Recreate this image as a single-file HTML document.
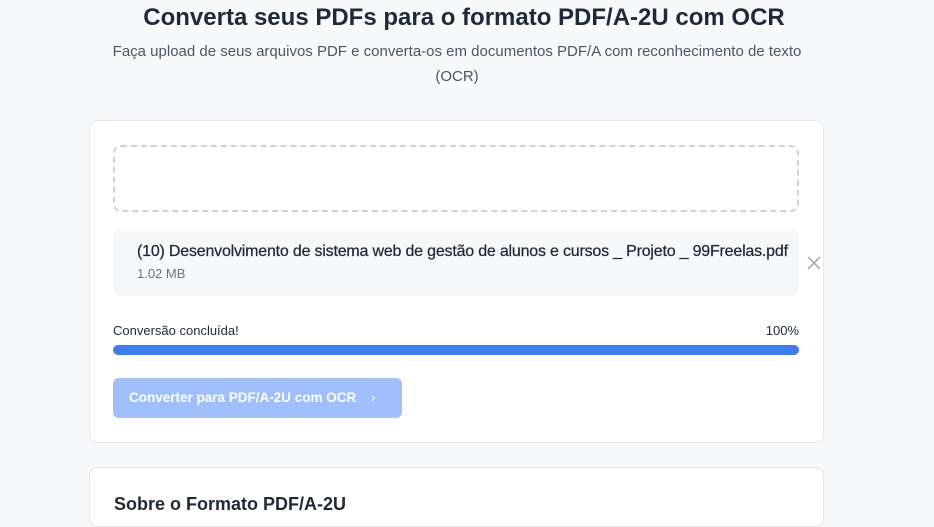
<!DOCTYPE html>
<html><head><meta charset="utf-8"><style>
*{box-sizing:border-box;margin:0;padding:0}
body{width:934px;height:505px;overflow:hidden;background:#f8f9fb;font-family:"Liberation Sans",sans-serif;color:#1f2937;position:relative}
h1{position:absolute;top:4px;left:-3px;width:934px;text-align:center;font-size:24px;font-weight:bold;color:#1f2937}
.sub{position:absolute;top:39px;left:90px;width:734px;text-align:center;font-size:15px;line-height:25px;color:#4b5563}
.card{position:absolute;left:89px;width:735px;background:#fff;border:1px solid #e3e6ea;border-radius:8px}
.drop{position:absolute;left:23px;top:24px;width:686px;height:67px;border:2px dashed #cbd2dc;border-radius:8px}
.file{position:absolute;left:23px;top:108px;width:686px;height:67px;background:#f7f8fa;border-radius:8px}
.fn{position:absolute;left:24px;top:14px;font-size:16px;color:#1f2937;white-space:nowrap;letter-spacing:-0.2px;-webkit-text-stroke:0.25px #1f2937}
.fs{position:absolute;left:24px;top:37px;font-size:13px;color:#6b7280}
.x{position:absolute;left:694px;top:27px}
.lbl{position:absolute;top:202px;font-size:13px;color:#1f2937}
.bar{position:absolute;left:23px;top:224px;width:686px;height:10px;border-radius:5px;background:#3f7ded}
.btn{position:absolute;left:23px;top:257px;width:289px;height:40px;border-radius:6px;background:#a0befa;color:#fff;font-size:13.5px;font-weight:bold;line-height:40px;padding-left:16px}
</style></head><body>
<h1>Converta seus PDFs para o formato PDF/A-2U com OCR</h1>
<div class="sub">Faça upload de seus arquivos PDF e converta-os em documentos PDF/A com reconhecimento de texto (OCR)</div>
<div class="card" style="top:120px;height:323px">
<div class="drop"></div>
<div class="file"><div class="fn">(10) Desenvolvimento de sistema web de gestão de alunos e cursos _ Projeto _ 99Freelas.pdf</div><div class="fs">1.02 MB</div>
<svg class="x" width="14" height="14" viewBox="0 0 14 14"><path d="M1 1L13 13M13 1L1 13" stroke="#9ca3af" stroke-width="1.5"/></svg></div>
<div class="lbl" style="left:23px">Conversão concluída!</div>
<div class="lbl" style="right:24px">100%</div>
<div class="bar"></div>
<div class="btn">Converter para PDF/A-2U com OCR<span style="position:absolute;left:258px;font-weight:normal">›</span></div>
</div>
<div class="card" style="top:467px;height:60px"><div style="position:absolute;left:24px;top:26px;font-size:18px;font-weight:bold">Sobre o Formato PDF/A-2U</div></div>
</body></html>
